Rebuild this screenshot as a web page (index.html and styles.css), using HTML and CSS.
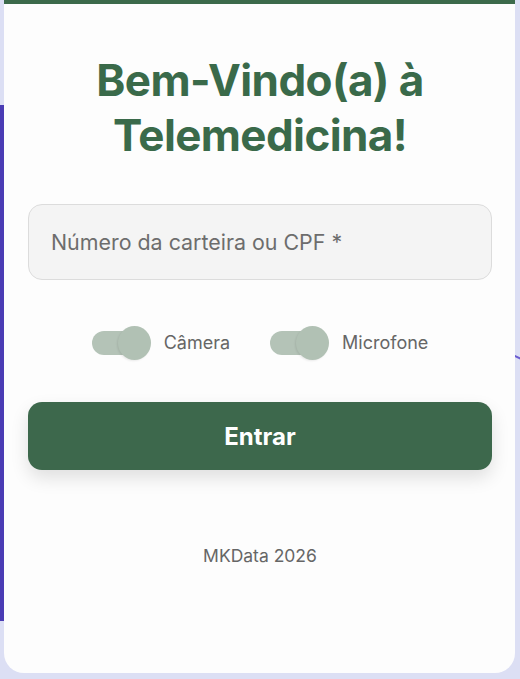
FILE: index.html
```html
<!DOCTYPE html>
<html lang="pt-BR">
<head>
<meta charset="utf-8">
<title>Telemedicina</title>
<link rel="stylesheet" href="styles.css">
</head>
<body>
<div class="deco-left"></div>
<div class="deco-right"></div>
<main class="card">
  <h1 class="title">Bem-Vindo(a) à<br>Telemedicina!</h1>
  <div class="field">
    <input class="input" type="text" placeholder="Número da carteira ou CPF *">
  </div>
  <div class="toggles">
    <label class="toggle">
      <span class="switch"><span class="knob"></span></span>
      <span class="toggle-label">Câmera</span>
    </label>
    <label class="toggle">
      <span class="switch"><span class="knob"></span></span>
      <span class="toggle-label">Microfone</span>
    </label>
  </div>
  <button class="btn" type="button">Entrar</button>
  <footer class="footer">MKData 2026</footer>
</main>
</body>
</html>
```
FILE: styles.css
```css
* { box-sizing: border-box; }
html, body { margin: 0; padding: 0; }
body {
  background: #dcdff4;
  font-family: "Inter", "Noto Sans", sans-serif;
  width: 520px;
  height: 679px;
  overflow: hidden;
  position: relative;
}
.deco-left {
  position: absolute;
  left: 0;
  top: 105px;
  width: 6px;
  height: 516px;
  background: #4a3cb4;
}
.deco-right {
  position: absolute;
  left: 512px;
  top: 356px;
  width: 10px;
  height: 2px;
  background: #6a5cd0;
  transform: rotate(25deg);
}
.card {
  position: relative;
  margin: 0 5px 0 4px;
  height: 673px;
  background: #fdfdfd;
  border-top: 4px solid #3c6a4b;
  border-radius: 0 0 20px 20px;
  padding: 0 23px 0 24px;
  display: flex;
  flex-direction: column;
  align-items: stretch;
}
.title {
  margin: 49px 0 0;
  text-align: center;
  color: #3a6a4a;
  font-size: 44px;
  line-height: 55px;
  font-weight: 700;
  letter-spacing: -0.6px;
}
.field { margin-top: 41px; }
.input {
  display: block;
  width: 100%;
  height: 76px;
  border: 1px solid #dcdcdc;
  border-radius: 14px;
  background: #f4f4f4;
  padding: 0 22px;
  font-family: inherit;
  font-size: 21.4px;
  color: #333;
  outline: none;
}
.input::placeholder { color: #6d6d6d; }
.toggles {
  margin-top: 45px;
  display: flex;
  justify-content: center;
  gap: 40px;
  height: 35px;
  align-items: center;
}
.toggle {
  display: flex;
  align-items: center;
  gap: 13px;
}
.switch {
  position: relative;
  width: 59px;
  height: 34px;
  display: flex;
  align-items: center;
}
.switch::before {
  content: "";
  width: 48px;
  height: 24px;
  border-radius: 12px;
  background: #b4c3b7;
}
.knob {
  position: absolute;
  right: 0;
  top: 0;
  width: 33px;
  height: 34px;
  border-radius: 50%;
  background: #b1c1b4;
  box-shadow: -1px 1px 2px rgba(0,0,0,0.08);
}
.toggle-label {
  font-size: 18px;
  color: #666;
}
.btn {
  margin-top: 42px;
  height: 68px;
  border: none;
  border-radius: 14px;
  background: #3d684c;
  color: #fff;
  font-family: inherit;
  font-size: 24px;
  font-weight: 700;
  box-shadow: 0 8px 18px rgba(0,0,0,0.12);
}
.footer {
  margin-top: 76px;
  text-align: center;
  font-size: 17.5px;
  line-height: 20px;
  color: #666;
}
```
